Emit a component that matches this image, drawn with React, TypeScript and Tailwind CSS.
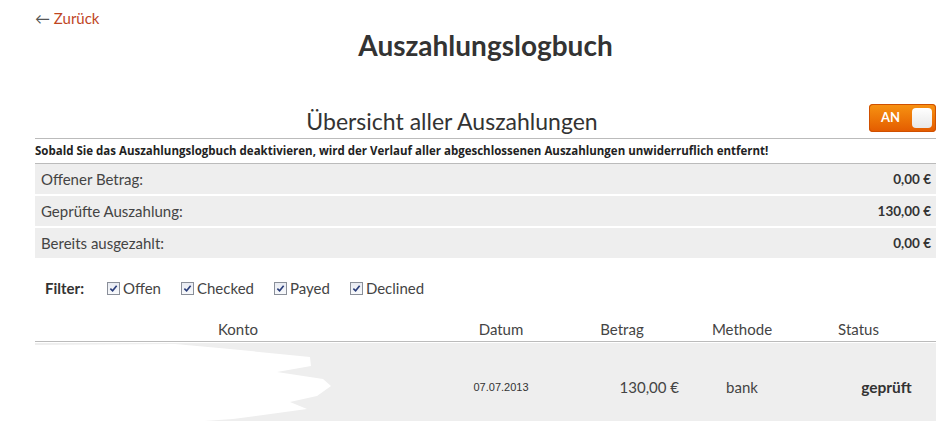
const rows = [
  { label: 'Offener Betrag:', value: '0,00 €' },
  { label: 'Geprüfte Auszahlung:', value: '130,00 €' },
  { label: 'Bereits ausgezahlt:', value: '0,00 €' },
]

const filters = ['Offen', 'Checked', 'Payed', 'Declined']

const CheckBox = () => (
  <span className="inline-flex h-[13px] w-[13px] items-center justify-center border border-[#8a8f99] bg-gradient-to-b from-[#e8ebf2] to-[#f8f9fb]">
    <svg viewBox="0 0 10 10" className="h-[9px] w-[9px]">
      <path d="M1.5 5.2 L4 7.6 L8.5 2" fill="none" stroke="#2a3d7a" strokeWidth="1.8" />
    </svg>
  </span>
)

const App = () => {
  return (
    <div className="min-h-[421px] bg-white pl-[35px] pr-[6px] text-[#444] font-['Lato',sans-serif]">
      <div className="pt-[8px] text-[15px] leading-[20px]">
        <a href="#" className="text-[#c0461f]">
          <span className="text-[#555]">←</span> Zurück
        </a>
      </div>

      <h1 className="text-center text-[28px] font-bold leading-[34px] text-[#333]">Auszahlungslogbuch</h1>

      <div className="mt-[42px] flex items-end border-b border-[#bbb] pb-[2px]">
        <h2 className="flex-1 text-center text-[23px] leading-[30px] text-[#333]">Übersicht aller Auszahlungen</h2>
        <div className="mb-[4px] flex h-[28px] w-[67px] items-center justify-between rounded-[4px] bg-gradient-to-b from-[#f79312] to-[#e35a00] pl-[12px] pr-[4px] shadow-[inset_0_0_0_1px_#d05000]">
          <span className="text-[13px] font-bold text-white">AN</span>
          <span className="h-[20px] w-[20px] rounded-[4px] bg-gradient-to-b from-white to-[#e8e8e8]" />
        </div>
      </div>

      <p className="border-b border-[#bbb] py-[4px] text-[11.5px] font-bold leading-[16px] text-[#222] font-['Open_Sans',sans-serif]">
        Sobald Sie das Auszahlungslogbuch deaktivieren, wird der Verlauf aller abgeschlossenen Auszahlungen unwiderruflich entfernt!
      </p>

      <div className="flex flex-col gap-[2px]">
        {rows.map((r) => (
          <div key={r.label} className="flex h-[30px] items-center justify-between bg-[#eee] pl-[6px] pr-[5px]">
            <span className="text-[15px]">{r.label}</span>
            <span className="text-[13.5px] font-bold text-[#333]">{r.value}</span>
          </div>
        ))}
      </div>

      <div className="mt-[20px] flex items-center pl-[10px] text-[15px] leading-[20px]">
        <span className="mr-[23px] text-[15px] font-bold text-[#333]">Filter:</span>
        {filters.map((f) => (
          <label key={f} className="mr-[20px] flex items-center gap-[3px]">
            <CheckBox />
            {f}
          </label>
        ))}
      </div>

      <div className="mt-[21px] grid grid-cols-[406px_120px_122px_118px_135px] border-b border-[#bbb] pb-[2px] text-[15px] leading-[20px] text-[#444]">
        <span className="text-center">Konto</span>
        <span className="text-center">Datum</span>
        <span className="text-center">Betrag</span>
        <span className="text-center">Methode</span>
        <span className="pr-[20px] text-center">Status</span>
      </div>

      <div className="mt-[1px] grid h-[79px] grid-cols-[406px_120px_122px_118px_135px] items-center bg-[#eee]">
        <div className="relative h-full">
          <svg viewBox="0 0 300 79" className="absolute left-0 top-0 h-full w-[300px]">
            <path
              d="M0 2 L140 1 L195 6 L275 14 L276 23 L242 29 L288 36 L296 43 L282 53 L255 59 L272 66 L198 76 L155 79 L0 79 Z"
              fill="#fff"
            />
          </svg>
        </div>
        <span className="pt-[10px] text-center text-[11px] text-[#333] font-['Liberation_Sans',sans-serif]">07.07.2013</span>
        <span className="pt-[10px] pr-[4px] text-right text-[15px]">130,00 €</span>
        <span className="pt-[10px] text-center text-[15px]">bank</span>
        <span className="pt-[10px] pl-[36px] text-center text-[15.5px] font-bold text-[#333]">geprüft</span>
      </div>
    </div>
  )
}

export default App
